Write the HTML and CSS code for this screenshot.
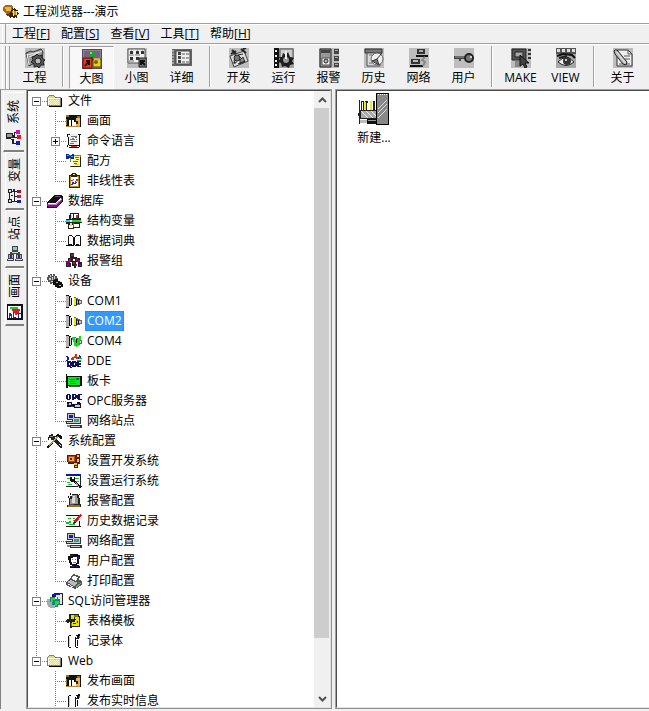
FILE: index.html
```html
<!DOCTYPE html>
<html lang="zh-CN">
<head>
<meta charset="utf-8">
<title>工程浏览器---演示</title>
<link rel="stylesheet" href="styles.css">
</head>
<body>
<svg class="sprite" aria-hidden="true">
  <symbol id="app" viewBox="0 0 16 16"><path d="M0 3l2-2h7l1 2v7H3L0 7z" fill="#a86a10"/><path d="M2 3h6v4H3z" fill="#e8b840"/><path d="M0 7l3 3h4v3l-3-1-1-2z" fill="#6b3a08"/><path d="M9 4l2 1 1-2 1 3 2 0-1 2 2 2-2 1v3l-2-1-1 2-2-2-2 1 0-3-1-2 2-1z" fill="#3a2408"/><path d="M9 7h4v4h-3z" fill="#c8921c"/><path d="M10 6h1v6h-1zM13 7h1v4h-1z" fill="#ffe070"/></symbol>

  <symbol id="t-project" viewBox="0 0 20 20"><path fill="#bdbdbd" d="M0 0h20v20H0z"/><path d="M1 5l5-2 2 1 8-3 2 3-1 7-13 7z" fill="#999" stroke="#333"/><path d="M2 7l12-3M4 9L17 3M4 17L2 6" stroke="#eee" fill="none"/><path d="M10 8l2-2 2 2 3-1 0 3 3 2-2 2 1 3-3 0-2 3-2-2-3 1 0-3-3-2 2-2-1-3z" fill="#555" stroke="#222"/><circle cx="13" cy="13" r="3" fill="#bbb" stroke="#222"/></symbol>
  <symbol id="t-large" viewBox="0 0 20 20"><path fill="#5a4660" d="M0 0h20v20H0z"/><path d="M1 1h18v18H1z" fill="#8e8290"/><path d="M2 2h16v7H2z" fill="#756381"/><circle cx="10" cy="5" r="3" fill="#18a828"/><circle cx="9" cy="4" r="1" fill="#8f8"/><path d="M10 8v4" stroke="#111"/><path d="M1 9h9v10H1z" fill="#e83810" stroke="#701000"/><path d="M11 10h8v8h-8z" fill="#e8d020" stroke="#514400"/><path d="M3 17l4-5M4 12h3v4" stroke="#111" stroke-width="2" fill="none"/><circle cx="14" cy="13" r="2" fill="#776500"/><path d="M12 10h6" stroke="#fff290"/></symbol>
  <symbol id="t-small" viewBox="0 0 20 20"><path fill="#bdbdbd" d="M0 0h20v20H0z"/><path d="M1 1h17v14H1z" fill="#eee" stroke="#555"/><path d="M3 3h3v3H3zM9 3h3v3H9zM14 3h3v3h-3zM3 9h3v3H3zM9 9h3v3H9z" fill="#333"/><path d="M4 2h1M10 2h1M15 2h1M2 7h5M8 7h5M2 13h5" stroke="#777"/><path d="M12 10h8v9h-8z" fill="#777" stroke="#222"/><path d="M18 17l-4-4M14 17v-4h4" stroke="#111" fill="none" stroke-width="2"/></symbol>
  <symbol id="t-detail" viewBox="0 0 20 20"><path fill="#666" d="M0 1h20v17H0z"/><path d="M0 3h2M0 6h2M0 9h2M0 12h2M0 15h2" stroke="#ddd"/><path d="M4 3h14v13H4z" fill="#f0f0f0" stroke="#444"/><path d="M6 4h3v3H6zM6 8h3v3H6zM6 12h3v3H6z" fill="#444"/><path d="M10 6h7M10 10h7M10 14h7" stroke="#555" stroke-dasharray="3 1"/></symbol>
  <symbol id="t-dev" viewBox="0 0 20 20"><path fill="#bdbdbd" d="M0 0h20v20H0z"/><path d="M1 8L15 3l4 10L5 19z" fill="#ddd" stroke="#444"/><path d="M3 2l4 4M2 6l5-3M12 1l5 4M14 1l3-1" stroke="#222" stroke-width="2"/><circle cx="8" cy="10" r="3" fill="#777" stroke="#222"/><path d="M11 12l3-3 2 5-5 2zM4 15l4-1" fill="#888" stroke="#333"/><path d="M9 7l5-1M10 8l2 2M5 12l1 4M9 16l7-3" stroke="#222"/></symbol>
  <symbol id="t-run" viewBox="0 0 20 20"><path fill="#a4a4a4" d="M0 0h20v20H0z"/><path d="M0 0h5v20H0z" fill="#111"/><path d="M1 2h2v2H1zM1 7h2v2H1zM1 12h2v2H1zM1 16h2v2H1z" fill="#eee"/><path d="M6 1h13v9H6z" fill="#ccc" stroke="#555"/><path d="M5 9l3 0 1-4 3 2 2-3 2 5 4 1-2 3 2 3-4 1-1 3-4-2-3 1-1-4-3-1 2-3z" fill="#1c1c1c"/><circle cx="12" cy="12" r="3" fill="#999"/><path d="M12 3v8" stroke="#eee" stroke-width="2"/></symbol>
  <symbol id="t-alarm" viewBox="0 0 20 20"><path fill="#bdbdbd" d="M0 0h20v20H0z"/><path d="M1 1h11v18H1z" fill="#999" stroke="#222"/><path d="M2 2h9v3H2z" fill="#444"/><path d="M3 10h8v7H3z" fill="#eee" stroke="#555"/><circle cx="7" cy="13" r="2" fill="#bbb" stroke="#222"/><path d="M15 1h5v5h-5zM15 8h5v5h-5zM15 15h5v4h-5z" fill="#444"/><path d="M16 2h3v1h-3zM16 9h3v1h-3zM16 16h3v1h-3z" fill="#aaa"/></symbol>
  <symbol id="t-history" viewBox="0 0 20 20"><path fill="#bdbdbd" d="M0 0h20v20H0z"/><path d="M1 1h17v4H1z" fill="#777" stroke="#333"/><path d="M3 5h13v13H3z" fill="#d8d8d8" stroke="#555"/><path d="M5 7h6M5 15h5" stroke="#777"/><circle cx="13" cy="11" r="6" fill="#eee" stroke="#666"/><path d="M13 11l5-6M13 11l-5 2 7 4z" stroke="#333" fill="#777"/></symbol>
  <symbol id="t-network" viewBox="0 0 20 20"><path fill="#bdbdbd" d="M0 0h20v20H0z"/><path d="M8 1h8v5H8z" fill="#333"/><path d="M10 2h4v2h-4z" fill="#aaa"/><path d="M7 7h12v2H7z" fill="#111"/><path d="M2 11h9v5H2z" fill="#333"/><path d="M4 12h5v2H4z" fill="#bbb"/><path d="M1 17h13v2H1z" fill="#111"/><path d="M16 9l-3 3 3 2-2 4" stroke="#888" stroke-width="2" fill="none"/></symbol>
  <symbol id="t-user" viewBox="0 0 20 20"><path fill="#bdbdbd" d="M0 0h20v20H0z"/><path d="M0 8h11v3H7v2H5v-2H0z" fill="#444"/><path d="M1 9h10" stroke="#999"/><ellipse cx="15" cy="10" rx="4" ry="4" fill="#777" stroke="#222" stroke-width="2"/><circle cx="17" cy="9" r="1" fill="#eee"/></symbol>
  <symbol id="t-make" viewBox="0 0 20 20"><path fill="#bdbdbd" d="M0 0h20v20H0z"/><path d="M1 1h14v11H1z" fill="#555" stroke="#222"/><path d="M4 4h8v5H4z" fill="#aaa" stroke="#222"/><path d="M4 13h6v6H4z" fill="#888"/><path d="M9 7l9 8-4 0 2 4-2 1-2-4-3 2z" fill="#444" stroke="#111"/><path d="M17 1h3v2h-3zM17 5h3v2h-3zM17 9h3v2h-3z" fill="#333"/></symbol>
  <symbol id="t-view" viewBox="0 0 20 20"><path fill="#a8a8a8" d="M0 0h20v20H0z"/><path d="M0 0h20v6H0z" fill="#555"/><path d="M1 1h3v3H1zM6 1h3v3H6zM11 1h3v3h-3zM16 1h3v3h-3z" fill="#ddd"/><path d="M1 8l6-2 9 1 3 3" stroke="#111" stroke-width="2" fill="none"/><path d="M2 14q8-9 16 0q-8 7-16 0z" fill="#eee" stroke="#222"/><circle cx="11" cy="13" r="4" fill="#333"/><circle cx="10" cy="12" r="1" fill="#fff"/><path d="M3 10l8-2" stroke="#222" stroke-width="2"/></symbol>
  <symbol id="t-about" viewBox="0 0 20 20"><path fill="#bdbdbd" d="M0 0h20v20H0z"/><path d="M4 2h11l4 4v12H4z" fill="#eee" stroke="#333"/><path d="M15 2v4h4M11 8h6M12 11h5M6 16h11" stroke="#555" fill="none"/><path d="M1 3q1-2 3-1l10 12-1 3-3-1L2 6z" fill="#bbb" stroke="#222"/><path d="M4 4l8 11" stroke="#eee"/></symbol>

  <symbol id="folder" viewBox="0 0 16 16"><path d="M2 13h13v1H2zM14 5h1v9h-1z" fill="#000"/><path d="M0 4h1V3h1V2h5v1h1v1h6v9H0z" fill="#808080"/><path d="M1 4h1V3h5v1h1v1h5v7H1z" fill="#e6e052"/><path d="M1 5h12v1H1zM1 5h1v7H1z" fill="#fffff0"/><path d="M3 7h10M2 8h10M3 9h10M2 10h10M3 11h10" transform="translate(0 .5)" stroke="#fff8c0" stroke-dasharray="1 1"/></symbol>
  <symbol id="picture" viewBox="0 0 16 16"><path d="M0 2h15v12H0z" fill="#111"/><path d="M0 2h3v2H0zM11 3h3v2h-3zM0 6h1v6H0z" fill="#8a7420"/><path d="M2 7h8v6H2z" fill="#fff"/><path d="M5 7h1v6H5zM8 7h1v2H8zM2 7h1v6H2z" fill="#000"/><path d="M10 5h4v8h-4z" fill="#e5b46a"/><path d="M10 8h2v3h-2zM9 6h1v3H9z" fill="#222"/><path d="M0 13h14v1H0z" fill="#b8862c"/></symbol>
  <symbol id="command" viewBox="0 0 16 16"><path d="M3 1h9v12H3z" fill="#eee"/><path d="M1 1h3v1H2v2H1zM2 4h1v8H2zM3 12h10v1H3zM3 14h10v1H3zM13 1h1v13h-1zM12 1h3v1h-3zM1 12h1v2H1z" fill="#111"/><path d="M5 3h6v1H5zM4 6h5v1H4zM10 6h1v1h-1zM5 8h6v1H5zM4 10h4v1H4zM9 4h2v1H9zM6 5h2v1H6z" fill="#777"/><path d="M5 13h6v1H5z" fill="#e02020"/></symbol>
  <symbol id="recipe" viewBox="0 0 16 16"><path d="M4 2h11v12H4z" fill="#8a8428"/><path d="M5 3h9v10H5z" fill="#fdf69a"/><path d="M4 9h3v4H4z" fill="#fff"/><path d="M5 13h10v1H5zM14 4h1v10h-1z" fill="#222"/><path d="M9 4h4v1H9zM10 6h3v1h-3zM7 8h5v1H7zM8 10h3v1H8z" fill="#77702d"/><path d="M9 11h4v1H9z" fill="#e8d810"/><path d="M0 1h2l2 2 2-2h2v5H6L4 5 2 6H0z" fill="#0828a0"/><path d="M1 2h2v1H1zM5 3h2v1H5z" fill="#30b8ff"/></symbol>
  <symbol id="nonlinear" viewBox="0 0 16 16"><path d="M3 2h11v13H3z" fill="#222"/><path d="M4 3h9v11H4z" fill="#b09410"/><path d="M5 4h7v9H5z" fill="#fff"/><path d="M6 0h4v1h1v3H5V1h1z" fill="#222"/><path d="M7 1h2v1H7z" fill="#fe3"/><path d="M5 7h2v1H5zM7 6h1v1H7zM9 8h1v1H9zM10 6h2v2h-2z" fill="#e02020"/><path d="M5 11h1V9h2v1h1V9h2v1h-1v1H7v1H5z" fill="#2030e0"/></symbol>
  <symbol id="database" viewBox="0 0 16 16"><path d="M0 9L7 2h7l2 2v5l-7 6H0z" fill="#111"/><path d="M0 11l2-1h6l7-5v4l-6 5H1z" fill="#8a108a"/><path d="M1 10h7l6-5v1l-6 6H1z" fill="#fff"/><path d="M1 11h7l7-5v1l-6 5H1z" fill="#c080c8"/><path d="M8 3h5v1H8z" fill="#a030a0"/></symbol>
  <symbol id="struct" viewBox="0 0 16 16"><path d="M4 0h9v5h2v4h1v1h-2v5H8v1H2v-5H0V6h3V2h1z" fill="#222"/><path d="M5 1h2v4H5zM8 1h4v4H8zM3 7h5v2H3zM3 12h4v3H3zM8 11h5v3H8z" fill="#fff"/><path d="M10 2h2v3h-2z" fill="#e01850"/><path d="M5 2h1v4H5zM4 10h2v3H4z" fill="#f5e820"/><path d="M6 7h9v2H6z" fill="#20d830"/><path d="M0 7h4v2H0z" fill="#10d8e8"/><path d="M7 10h1v4H7z" fill="#d020d0"/></symbol>
  <symbol id="book" viewBox="0 0 16 16"><path d="M3 2h3v1H3zM2 3h1v9H2zM6 3h1v1H6zM7 4h1v9H7zM9 3h1v1H9zM10 2h4v1h-4zM8 4h1v8H8zM14 3h1v9h-1zM0 12h7v1H0zM9 12h6v1H9zM3 11h3v1H3zM10 11h3v1h-3z" fill="#111"/></symbol>
  <symbol id="alarmgroup" viewBox="0 0 16 16"><path d="M4 0h4v4H4zM2 5h5v4H2zM9 5h5v4H9zM0 10h5v4H0zM6 8h4v5H6zM12 9h4v5h-4zM4 4h7v2H4zM8 12h2v3H8z" fill="#222"/><path d="M5 1h3v2H5zM3 6h2v2H3zM10 6h2v2h-2zM7 9h2v2H7z" fill="#b01038"/><path d="M0 8h4v2H0zM1 11h2v2H1zM12 7h2v2h-2zM13 11h2v2h-2zM9 11h2v2H9z" fill="#8a0a7a"/></symbol>
  <symbol id="device" viewBox="0 0 16 16"><path d="M0 4h1V2h2V1h2v2h1V1h2v2h2v2h1v3H8v2H5v1H3V9H1V7H0z" fill="#555"/><path d="M3 2h1v2H3zM2 5h2v2H2zM5 4h1v3H5zM7 3h1v3H7zM4 8h2v1H4z" fill="#ccc"/><path d="M6 7h2V6h3v2h2v1h2v2h1v3h-2v1h-4v-1H8v-2H6z" fill="#111"/><path d="M9 9h2v1H9zM12 12h2v1h-2z" fill="#c8b870"/></symbol>
  <symbol id="com" viewBox="0 0 16 16"><path d="M0 2h3v1h2v2h1v7H5v1H3v2H0v-1h1V3H0z" fill="#111"/><path d="M0 3h3v11H0z" fill="#b4b4b4"/><path d="M4 4h1v8H4z" fill="#ddd"/><path d="M8 4h2v1h2v1h2v1h2v4h-2v1h-3v1H8z" fill="#666"/><path d="M8 5h2v7H8z" fill="#f0e800"/><path d="M10 6h1v6h-1zM12 7h1v4h-1z" fill="#111"/><path d="M13 8h2v2h-2zM11 8h1v2h-1z" fill="#ccc"/></symbol>
  <symbol id="com4" viewBox="0 0 16 16"><use href="#com"/><path d="M6 4h3v3h1v3h1V7h1V5h1V3h2v4h-1v3h-1v3h-2v1h-1v-1H8V9H7V7H6z" fill="#18d820"/></symbol>
  <symbol id="dde" viewBox="0 0 16 16"><path d="M5 5h1V4h2V3h1V1h2v3h2v2h-3V5H8v2H5z" fill="#e02818"/><path d="M0 3h2v1h1v3H2v1H0V7h1V4H0zM12 4h1V2h1v1h1v2h-1v1h-2z" fill="#1020b0"/><path d="M13 4h1v1h2v1h-3zM11 7h4v1h-4z" fill="#18b828"/><path d="M1 8h4v1h1v4H5v1H1zM6 8h4v1h1v4h-1v1H6zM11 8h4v1h-2v1h2v2h-2v1h2v1h-4z" fill="#101058"/><path d="M3 10h1v2H3zM8 10h1v2H8z" fill="#fff"/><path d="M4 14h2v1H4z" fill="#111"/></symbol>
  <symbol id="board" viewBox="0 0 16 16"><path d="M0 1h1v2h15v10H2v2H0z" fill="#111"/><path d="M2 4h12v8H2z" fill="#00ee20"/><path d="M4 6h5v1H4zM4 8h5v1H4zM10 5h3v2h-3zM4 10h6v1H4z" fill="#087818"/><path d="M3 13h11v1H3z" fill="#555"/></symbol>
  <symbol id="opc" viewBox="0 0 16 16"><path d="M1 1h3v1h1v4H4v1H1V6H0V2h1zM6 1h4v1h1v3h-1v1H8v1H6zM12 1h4v1h-2v4h2v1h-4V6h-1V2h1z" fill="#101060"/><path d="M2 2h1v4H2zM8 2h1v2H8z" fill="#fff"/><path d="M1 9h5v2h5V9h3v1h1v5H8v-1H1z" fill="#111"/><path d="M3 10h2v2H3zM9 12h5v2H9z" fill="#ccc"/><path d="M1 11h2v1H1zM5 13h2v1H5zM11 11h2v1h-2z" fill="#2040c0"/></symbol>
  <symbol id="pcs" viewBox="0 0 16 16"><path d="M1 0h8v7H1zM0 8h9v3H0zM6 4h9v7H6zM4 12h12v3H4z" fill="#333"/><path d="M2 1h6v5H2zM1 9h7v1H1zM7 5h7v5H7zM5 13h9v1H5z" fill="#c8c8c8"/><path d="M3 2h4v3H3z" fill="#1018d8"/><path d="M8 6h5v3H8z" fill="#38a090"/><path d="M1 12h3v2H1z" fill="#888"/></symbol>
  <symbol id="tools" viewBox="0 0 16 16"><path d="M1 4h1V2h2V1h2v2h2v3h2l5 6v3h-2L7 8 5 7H4V5H2v2H1z" fill="#222"/><path d="M8 3l3-2 4 2v3h-2l-2-2-9 11H0v-2l9-8z" fill="#111"/><path d="M9 4l1-1 1 1-8 9H2v-1z" fill="#b0a060"/><path d="M10 8l4 5v1z" fill="#ddd"/><path d="M3 3h3v1H3z" fill="#888"/></symbol>
  <symbol id="devcfg" viewBox="0 0 16 16"><path d="M1 2h9V1h4v10h-2v4H8v-4H2V9H1z" fill="#6a1408"/><path d="M2 3h7v6H2z" fill="#a85018"/><path d="M3 4h5v4H3z" fill="#e8b030"/><path d="M4 5h2v2H4z" fill="#801808"/><path d="M11 2h2v2h-2zM11 6h2v3h-2zM8 10h3v2H8zM9 13h2v1H9z" fill="#f0c838"/></symbol>
  <symbol id="runcfg" viewBox="0 0 16 16"><path d="M0 1h15v12H0z" fill="#fff"/><path d="M0 1h15v2H0z" fill="#1018a8"/><path d="M1 5h4v1H1zM8 5h5v1H8zM1 9h3v1H1zM2 11h4v1H2zM10 8h3v1h-3z" fill="#20c030"/><path d="M0 13h16v1H0zM14 3h1v11h-1z" fill="#222"/><path d="M4 4h2v2h2V4l1 1v2l6 7-1 2-7-7H5L4 7z" fill="#111"/><path d="M9 9l4 5" stroke="#aaa"/></symbol>
  <symbol id="bell" viewBox="0 0 16 16"><path d="M6 1h6v1h1v3h1v6h1v3H1v-2h2V5h1V3h2z" fill="#222"/><path d="M6 2h5v3h1v6H4V6h2z" fill="#999"/><path d="M7 3h2v7H6V5h1z" fill="#ddd"/><path d="M2 12h12v2H2z" fill="#8a7818"/><path d="M4 11h4v1H4z" fill="#704070"/><path d="M4 0h1v2H4zM2 3h1v2H2zM13 1h1v1h-1z" fill="#111"/></symbol>
  <symbol id="record" viewBox="0 0 16 16"><path d="M0 1h15v12H0z" fill="#fff"/><path d="M0 2h14v1H0zM0 13h15v1H0zM13 8h1v6h-1z" fill="#111"/><path d="M2 5h3v1H2zM0 9h3V8h2v2H3v1H0zM7 7h3v1H7zM3 11h6v1H3zM7 5h2v1H7z" fill="#18b828"/><path d="M8 8l6-7 2 1-6 8-3 1z" fill="#d81820"/><path d="M8 9h2v1H8z" fill="#111"/></symbol>
  <symbol id="person" viewBox="0 0 16 16"><path d="M4 1h8v1h2v4h-1v5h-2v1h2v1h1v2H4v-2h2v-1H4v-2H3V7H2V3h2z" fill="#111"/><path d="M5 5h2V4h4v6h-1v1H6V9H5z" fill="#fff"/><path d="M6 6h1v1H6zM9 6h1v1H9zM7 9h3v1H7z" fill="#777"/><path d="M5 13h3v1H5zM10 13h2v1h-2zM4 2h3v1H4zM12 4h1v2h-1z" fill="#1028c0"/></symbol>
  <symbol id="printer" viewBox="0 0 16 16"><path d="M0 9l4-3 3-5 7 2-1 4 3 1v4l-7 4-9-4z" fill="#555"/><path d="M1 9l4-2 7 3-4 3z" fill="#bbb"/><path d="M7 3l5 1-2 4-4-2z" fill="#fff"/><path d="M10 13l5-3v1l-5 4z" fill="#999"/><path d="M2 11l5 3" stroke="#eee"/><path d="M12 9h2v1h-2z" fill="#20b020"/></symbol>
  <symbol id="sql" viewBox="0 0 16 16"><path d="M5 3L7 0h9v12h-3z" fill="#222"/><path d="M8 1h7v10h-3z" fill="#e8e8e8"/><path d="M5 1h8v1H5z" fill="#1020b0"/><path d="M3 4h8v2h2v6h-2v2H3v-2H1V6h2z" fill="#108a80"/><path d="M4 5h4v2H6v2H4zM8 8h4v3h-2v2H8z" fill="#28d838"/><path d="M0 6h3v3h2v3h3v3H3v-1H1v-2H0z" fill="#aaa"/><path d="M8 4h2v2H8z" fill="#d8f8ff"/></symbol>
  <symbol id="template" viewBox="0 0 16 16"><path d="M3 1h10v2h1v11H6v1H4V9H0V7h3z" fill="#222"/><path d="M5 2h3v4H5zM9 4h4v9H6V9h3z" fill="#f0e000"/><path d="M8 2h4v2H8zM5 10h1v3H5z" fill="#908000"/><path d="M8 6h2v1H8zM11 8h1v2h-1zM7 10h3v1H7z" fill="#222"/><path d="M1 6h2v4H1z" fill="#222"/></symbol>
  <symbol id="recordset" viewBox="0 0 16 16"><path d="M2 3h1v11H2zM3 2h2v1H3zM9 4h1v10H9zM10 5h3v1h-3zM10 2h2v1h-2zM12 1h2v2h-2zM11 3h2v2h-2zM3 14h2v1H3zM10 14h2v1h-2zM11 7h1v6h-1z" fill="#111"/><path d="M3 4h1v9H3z" fill="#ccc"/><path d="M13 3h1v2h-1z" fill="#777"/></symbol>

  <symbol id="s-system" viewBox="0 0 16 16"><path d="M0 3h7v5H0z" fill="#222"/><path d="M1 4h5v3H1z" fill="#999"/><path d="M0 8h5v1H0zM5 9h3v4h3v1H6v-4H5zM8 2h3v1H8zM7 5h1V2h1v5h3v1H7z" fill="#222"/><path d="M10 0h4v4h-4z" fill="#d010c0"/><path d="M11 5h4v4h-4z" fill="#e01828"/><path d="M10 11h4v4h-4z" fill="#1020c8"/></symbol>
  <symbol id="s-variable" viewBox="0 0 16 16"><path d="M1 1h4v4H1zM1 11h4v4H1zM2 5h1v6H2zM5 3h8v1H5zM7 3h1v10H7zM5 13h8v1H5zM8 8h5v1H8zM4 7h2v1H4z" fill="#222"/><path d="M2 2h2v2H2zM2 12h2v2H2z" fill="#ddd"/><path d="M10 2h4v3h-4z" fill="#a01030"/><path d="M10 7h4v3h-4z" fill="#d81828"/><path d="M10 12h4v3h-4zM6 1h2v2H6z" fill="#1820a0"/></symbol>
  <symbol id="s-station" viewBox="0 0 16 16"><path d="M5 0h6v6H5zM3 6h10v2H3zM1 8h6v5H1zM9 8h6v5H9zM0 13h7v2H0zM8 13h8v2H8z" fill="#444"/><path d="M6 1h4v3H6z" fill="#60e0d8"/><path d="M2 9h4v3H2zM10 9h4v3h-4z" fill="#b8b8b8"/><path d="M3 9h2v3H3zM11 9h2v3h-2z" fill="#1820b8"/><path d="M5 6h6v1H5zM1 13h5v1H1zM9 13h6v1H9z" fill="#ddd"/></symbol>
  <symbol id="s-picture" viewBox="0 0 16 16"><path d="M0 0h16v16H0z" fill="#111"/><path d="M1 2h13v12H1z" fill="#fff"/><path d="M3 3h8v2H3z" fill="#18c828"/><path d="M5 5h8v2h-1v2h-2v2H8V9H6V7H5z" fill="#e01820"/><path d="M2 9h2v1h1v4H4v-2H3v2H2zM6 8h1v5h2v1H6zM10 9h4v1h-2v4h-1v-4h-1z" fill="#1828d0"/></symbol>

  <symbol id="newitem" viewBox="0 0 32 32"><path d="M18 0h13v32H18z" fill="#000"/><path d="M19 1h11v30H19z" fill="#888"/><path d="M20 1h10" stroke="#fff" stroke-dasharray="1 1"/><path d="M20 16L29 7M20 20l9-9M20 25l9-9" stroke="#ddd"/><path d="M1 7h1v24H1zM2 17h16v9H2zM0 20h2v3H0z" fill="#222"/><path d="M3 18h15v7H3z" fill="#aaa"/><path d="M3 8h3v9H3zM7 8h3v9H7zM13 8h4v9h-4z" fill="#222"/><path d="M4 9h1v8H4z" fill="#fff"/><path d="M6 9h2v8H6zM12 8h3v9h-3z" fill="#f0e818"/><path d="M9 10h1v7H9zM14 9h1v8h-1z" fill="#fff"/><path d="M2 27h8v3H2z" fill="#bbb"/><path d="M9 26h9v5H9z" fill="#111"/><path d="M10 27h8v1h-8z" fill="#999"/><path d="M3 18l7 7M8 18l7 7M13 18l5 5" stroke="#eee"/></symbol>
</svg>

<header class="title-bar">
  <svg class="icon app-icon"><use href="#app"/></svg>
  <h1>工程浏览器---演示</h1>
</header>

<nav class="menu-bar" aria-label="菜单">
  <span class="grip"></span>
  <button type="button">工程[<u>F</u>]</button>
  <button type="button">配置[<u>S</u>]</button>
  <button type="button">查看[<u>V</u>]</button>
  <button type="button">工具[<u>T</u>]</button>
  <button type="button">帮助[<u>H</u>]</button>
</nav>

<div class="toolbar" role="toolbar" aria-label="工具栏">
  <span class="grip"></span><span class="grip"></span>
  <button type="button"><svg><use href="#t-project"/></svg>工程</button>
  <span class="separator"></span>
  <button type="button" class="pressed" aria-pressed="true"><svg><use href="#t-large"/></svg>大图</button>
  <button type="button"><svg><use href="#t-small"/></svg>小图</button>
  <button type="button"><svg><use href="#t-detail"/></svg>详细</button>
  <span class="separator"></span>
  <button type="button"><svg><use href="#t-dev"/></svg>开发</button>
  <button type="button"><svg><use href="#t-run"/></svg>运行</button>
  <button type="button"><svg><use href="#t-alarm"/></svg>报警</button>
  <button type="button"><svg><use href="#t-history"/></svg>历史</button>
  <button type="button"><svg><use href="#t-network"/></svg>网络</button>
  <button type="button"><svg><use href="#t-user"/></svg>用户</button>
  <span class="separator"></span>
  <button type="button"><svg><use href="#t-make"/></svg>MAKE</button>
  <button type="button"><svg><use href="#t-view"/></svg>VIEW</button>
  <span class="separator"></span>
  <button type="button"><svg><use href="#t-about"/></svg>关于</button>
</div>

<main class="workspace">
  <div class="side-tabs" role="tablist" aria-orientation="vertical">
    <button type="button" role="tab" class="active" aria-selected="true"><span>系统</span><svg class="icon"><use href="#s-system"/></svg></button>
    <button type="button" role="tab"><span>变量</span><svg class="icon"><use href="#s-variable"/></svg></button>
    <button type="button" role="tab"><span>站点</span><svg class="icon"><use href="#s-station"/></svg></button>
    <button type="button" role="tab"><span>画面</span><svg class="icon"><use href="#s-picture"/></svg></button>
  </div>

  <section class="tree-panel">
    <ul class="tree">
      <li><div class="row"><button type="button" class="toggle" aria-label="折叠"></button><svg class="icon"><use href="#folder"/></svg><span class="label">文件</span></div>
        <ul>
          <li><div class="row"><svg class="icon"><use href="#picture"/></svg><span class="label">画面</span></div></li>
          <li><div class="row"><button type="button" class="toggle closed" aria-label="展开"></button><svg class="icon"><use href="#command"/></svg><span class="label">命令语言</span></div></li>
          <li><div class="row"><svg class="icon"><use href="#recipe"/></svg><span class="label">配方</span></div></li>
          <li><div class="row"><svg class="icon"><use href="#nonlinear"/></svg><span class="label">非线性表</span></div></li>
        </ul>
      </li>
      <li><div class="row"><button type="button" class="toggle" aria-label="折叠"></button><svg class="icon"><use href="#database"/></svg><span class="label">数据库</span></div>
        <ul>
          <li><div class="row"><svg class="icon"><use href="#struct"/></svg><span class="label">结构变量</span></div></li>
          <li><div class="row"><svg class="icon"><use href="#book"/></svg><span class="label">数据词典</span></div></li>
          <li><div class="row"><svg class="icon"><use href="#alarmgroup"/></svg><span class="label">报警组</span></div></li>
        </ul>
      </li>
      <li><div class="row"><button type="button" class="toggle" aria-label="折叠"></button><svg class="icon"><use href="#device"/></svg><span class="label">设备</span></div>
        <ul>
          <li><div class="row"><svg class="icon"><use href="#com"/></svg><span class="label">COM1</span></div></li>
          <li><div class="row"><svg class="icon"><use href="#com"/></svg><span class="label selected">COM2</span></div></li>
          <li><div class="row"><svg class="icon"><use href="#com4"/></svg><span class="label">COM4</span></div></li>
          <li><div class="row"><svg class="icon"><use href="#dde"/></svg><span class="label">DDE</span></div></li>
          <li><div class="row"><svg class="icon"><use href="#board"/></svg><span class="label">板卡</span></div></li>
          <li><div class="row"><svg class="icon"><use href="#opc"/></svg><span class="label">OPC服务器</span></div></li>
          <li><div class="row"><svg class="icon"><use href="#pcs"/></svg><span class="label">网络站点</span></div></li>
        </ul>
      </li>
      <li><div class="row"><button type="button" class="toggle" aria-label="折叠"></button><svg class="icon"><use href="#tools"/></svg><span class="label">系统配置</span></div>
        <ul>
          <li><div class="row"><svg class="icon"><use href="#devcfg"/></svg><span class="label">设置开发系统</span></div></li>
          <li><div class="row"><svg class="icon"><use href="#runcfg"/></svg><span class="label">设置运行系统</span></div></li>
          <li><div class="row"><svg class="icon"><use href="#bell"/></svg><span class="label">报警配置</span></div></li>
          <li><div class="row"><svg class="icon"><use href="#record"/></svg><span class="label">历史数据记录</span></div></li>
          <li><div class="row"><svg class="icon"><use href="#pcs"/></svg><span class="label">网络配置</span></div></li>
          <li><div class="row"><svg class="icon"><use href="#person"/></svg><span class="label">用户配置</span></div></li>
          <li><div class="row"><svg class="icon"><use href="#printer"/></svg><span class="label">打印配置</span></div></li>
        </ul>
      </li>
      <li><div class="row"><button type="button" class="toggle" aria-label="折叠"></button><svg class="icon"><use href="#sql"/></svg><span class="label">SQL访问管理器</span></div>
        <ul>
          <li><div class="row"><svg class="icon"><use href="#template"/></svg><span class="label">表格模板</span></div></li>
          <li><div class="row"><svg class="icon"><use href="#recordset"/></svg><span class="label">记录体</span></div></li>
        </ul>
      </li>
      <li><div class="row"><button type="button" class="toggle" aria-label="折叠"></button><svg class="icon"><use href="#folder"/></svg><span class="label">Web</span></div>
        <ul>
          <li><div class="row"><svg class="icon"><use href="#picture"/></svg><span class="label">发布画面</span></div></li>
          <li><div class="row"><svg class="icon"><use href="#recordset"/></svg><span class="label">发布实时信息</span></div></li>
        </ul>
      </li>
    </ul>
    <div class="scrollbar">
      <button type="button" aria-label="向上滚动"><svg viewBox="0 0 9 6"><path d="M1 5l3.500-3.500L8 5"/></svg></button>
      <div class="track"><div class="thumb"></div></div>
      <button type="button" aria-label="向下滚动"><svg viewBox="0 0 9 6"><path d="M1 1l3.500 3.500L8 1"/></svg></button>
    </div>
  </section>

  <section class="content-panel">
    <button type="button" class="item"><svg><use href="#newitem"/></svg>新建...</button>
  </section>
</main>
</body>
</html>
```

FILE: styles.css
```css
* {
  box-sizing: border-box;
}

body {
  margin: 0;
  height: 100vh;
  display: flex;
  flex-direction: column;
  overflow: hidden;
  background: #f0f0f0;
  color: #000;
  font: 12px/20px "Open Sans", "Noto Sans CJK SC", sans-serif;
}

button {
  margin: 0;
  padding: 0;
  border: 0;
  background: none;
  color: inherit;
  font: inherit;
}

.sprite {
  position: absolute;
  width: 0;
  height: 0;
}

.icon {
  width: 16px;
  height: 16px;
  flex: none;
  shape-rendering: crispEdges;
}

.title-bar {
  display: flex;
  align-items: center;
  gap: 4px;
  height: 23px;
  padding-left: 3px;
  background: #fff;
}

.title-bar h1 {
  margin: 0;
  font: inherit;
}

.menu-bar {
  display: flex;
  gap: 11px;
  height: 20px;
  padding-left: 2px;
  border-top: 1px solid #a0a0a0;
  box-shadow: inset 0 1px #fff;
}

.menu-bar .grip {
  margin-right: -5px;
}

.grip {
  width: 4px;
  flex: none;
  border-left: 1px solid #fff;
  border-right: 1px solid #a0a0a0;
}

.toolbar {
  display: flex;
  height: 46px;
  padding: 2px 0 0 2px;
  border-top: 1px solid #a0a0a0;
  box-shadow: inset 0 1px #fff;
}

.toolbar .grip + .grip {
  margin-right: 2px;
}

.toolbar button {
  display: flex;
  flex-direction: column;
  align-items: center;
  width: 45px;
  flex: none;
  padding-top: 2px;
  line-height: 20px;
}

.toolbar button svg {
  width: 20px;
  height: 20px;
  flex: none;
}

.toolbar .pressed {
  border: 1px solid;
  border-color: #a0a0a0 #fff #fff #a0a0a0;
  background: #f8f8f8;
}

.separator {
  width: 12px;
  flex: none;
  margin-bottom: 2px;
  background: linear-gradient(90deg, #a0a0a0 1px, #fff 1px) no-repeat 5px 0 / 2px 100%;
}

.workspace {
  flex: 1;
  min-height: 0;
  display: flex;
  padding-bottom: 2px;
}

.side-tabs {
  display: flex;
  flex-direction: column;
  width: 26px;
  flex: none;
  padding: 2px 0 0 2px;
  border-left: 1px solid #808080;
  border-top: 1px solid #a0a0a0;
}

.side-tabs button {
  display: flex;
  flex-direction: column;
  align-items: center;
  justify-content: flex-end;
  gap: 6px;
  width: 19px;
  height: 58px;
  margin-left: 2px;
  padding-bottom: 4px;
  border-left: 1px solid #fff;
  border-bottom: 2px solid #808080;
  box-shadow: inset 0 1px #fff;
}

.side-tabs .active {
  width: 21px;
  height: 60px;
  margin-left: 0;
}

.side-tabs span {
  writing-mode: vertical-rl;
  text-orientation: sideways;
  transform: rotate(180deg);
  line-height: 16px;
}

.tree-panel {
  display: flex;
  width: 306px;
  flex: none;
  border: 2px ridge;
  border-color: #a0a0a0 #e3e3e3 #e3e3e3 #a0a0a0;
  background: #fff;
}

.tree {
  flex: 1;
  overflow: hidden;
}

.tree,
.tree ul {
  margin: 0;
  padding: 0;
  list-style: none;
}

/* Dotted connectors: --x is the column of the vertical line. */
.tree li {
  --x: 8px;
  --h: 100%;
  background:
    repeating-linear-gradient(90deg, #808080 0 1px, transparent 1px 2px) no-repeat var(--x) 10px / 12px 1px,
    repeating-linear-gradient(#808080 0 1px, transparent 1px 2px) no-repeat var(--x) 0 / 1px var(--h);
}

.tree li li {
  --x: 27px;
}

.tree > li:first-child {
  background-position: var(--x) 10px, var(--x) 10px;
}

.tree > li:last-child,
.tree > li:not(:last-child) li:last-child {
  --h: 10px;
}

.tree > li:last-child li {
  --h: 100%;
}

.row {
  display: flex;
  align-items: center;
  height: 20px;
  padding-left: 19px;
}

.row:has(.toggle) {
  padding-left: 4px;
}

li li .row {
  padding-left: 38px;
}

li li .row:has(.toggle) {
  padding-left: 23px;
}

.toggle {
  width: 9px;
  height: 9px;
  margin-right: 6px;
  border: 1px solid #808080;
  background: linear-gradient(#000, #000) no-repeat 1px 3px / 5px 1px, #fff;
}

.toggle.closed {
  background:
    linear-gradient(#000, #000) no-repeat 1px 3px / 5px 1px,
    linear-gradient(#000, #000) no-repeat 3px 1px / 1px 5px,
    #fff;
}

.label {
  margin-left: 3px;
  padding: 0 1px;
  border: 1px solid transparent;
  line-height: 18px;
  white-space: nowrap;
}

.label.selected {
  border: 1px dotted #b06010;
  background: #3399ff;
  color: #fff;
}

.scrollbar {
  display: flex;
  flex-direction: column;
  width: 16px;
  flex: none;
  background: #f0f0f0;
}

.scrollbar button {
  display: flex;
  align-items: center;
  justify-content: center;
  height: 17px;
  flex: none;
}

.scrollbar svg {
  width: 9px;
  height: 6px;
  fill: none;
  stroke: #505050;
  stroke-width: 2;
}

.track {
  flex: 1;
}

.thumb {
  width: 15px;
  height: 91%;
  background: #cdcdcd;
}

.content-panel {
  flex: 1;
  margin-left: 3px;
  padding: 2px 0 0 7px;
  border: 2px ridge #a0a0a0;
  border-right: 0;
  border-bottom-color: #e3e3e3;
  background: #fff;
}

.item {
  display: flex;
  flex-direction: column;
  align-items: center;
  width: 60px;
  gap: 3px;
}

.item svg {
  width: 32px;
  height: 32px;
  shape-rendering: crispEdges;
}
```
